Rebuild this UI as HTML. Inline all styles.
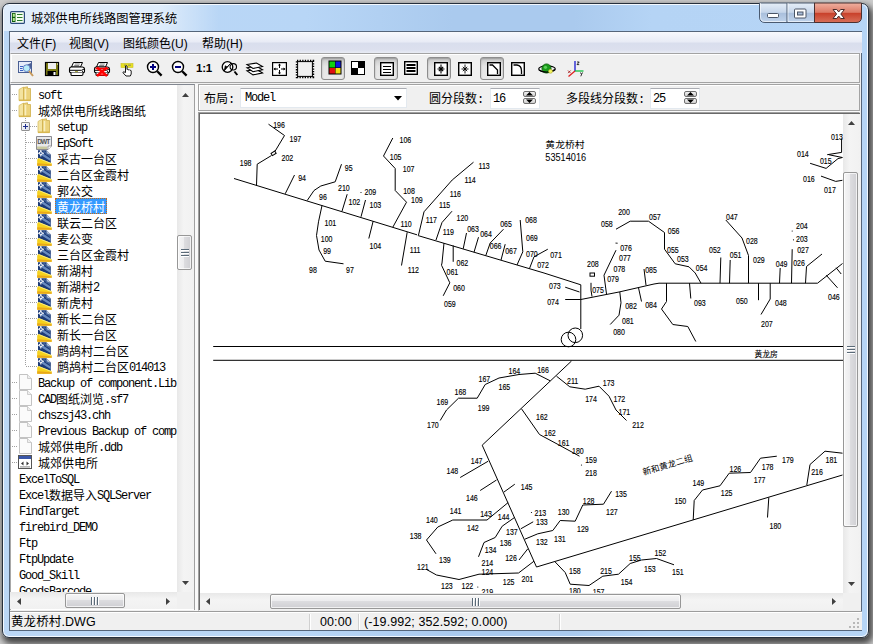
<!DOCTYPE html>
<html lang="zh"><head><meta charset="utf-8"><title>城郊供电所线路图管理系统</title>
<style>
html,body{margin:0;padding:0}
body{width:873px;height:644px;overflow:hidden;position:relative;background:#c4c4c4;font-family:"Liberation Sans","Noto Sans CJK SC",sans-serif;font-size:12px;color:#000}
div,svg{position:absolute;box-sizing:border-box}
.shadow{left:0;top:0;width:873px;height:644px;background:#ccc}
.win{left:2px;top:3px;width:867px;height:635px;border:1px solid #27303c;border-radius:7px;background:linear-gradient(to right,#bbd7f6 0,#b8d6f6 35%,#aacaee 52%,#aacaee 66%,#b5d4f5 75%,#b6d5f6 100%);box-shadow:2px 4px 6px 2px rgba(0,0,0,.65), inset 0 0 0 1px rgba(255,255,255,.85)}
.client{left:9px;top:31px;width:853px;height:600px;border:1px solid #55657a;background:#f0f0f0}
.title{left:31px;top:10px;height:18px;line-height:18px;font-size:12.2px;white-space:nowrap;text-shadow:0 0 5px rgba(255,255,255,.8)}
.menubar{left:10px;top:32px;width:852px;height:21px;background:linear-gradient(to bottom,#f8f9fd 0,#e9ecf6 45%,#d9deed 55%,#dce0ee 85%,#e9ecf4 100%)}
.mi{top:36px;height:17px;line-height:17px;font-size:12px;white-space:nowrap}
.toolbar{left:10px;top:53px;width:850px;height:30px;background:#f0f0f0;border:1px solid #a3a3a3;border-left-color:#f0f0f0;box-shadow:inset 1px 1px 0 #fff}
.ic{position:absolute;overflow:visible}
.pbtn{width:24px;height:23px;border:1px solid #8e8e8e;border-radius:3px;background:linear-gradient(to bottom,#c9c9c9,#e4e4e4 40%,#eaeaea);box-shadow:inset 0 1px 2px rgba(0,0,0,.25)}
.t11{left:196px;top:60px;width:18px;height:16px;line-height:16px;font-size:11.5px;font-weight:bold;letter-spacing:-.2px;font-family:"Liberation Sans",sans-serif}
.tree{left:10px;top:84px;width:185px;height:526px;background:#fff;border-top:1px solid #828790;border-right:1px solid #a0a0a0;border-left:1px solid #a8a8a8;overflow:hidden}
.treeclip{left:0;top:0;width:177px;height:592px;overflow:hidden}
.ti{height:16px;line-height:16px;font-size:12px;white-space:nowrap;font-family:"Liberation Mono","Noto Sans CJK SC",monospace}
.ti .m{letter-spacing:-1.2px;position:relative;top:-1px}
.ti.selt{color:#fff}
.selbg{background:#3399ff;border:1px dotted #cc6a10}
.hd{height:1px;background:repeating-linear-gradient(to right,#a0a0a0 0 1px,transparent 1px 2px)}
.vd{width:1px;background:repeating-linear-gradient(to bottom,#a0a0a0 0 1px,transparent 1px 2px)}
.plus{width:9px;height:9px;border:1px solid #919191;background:linear-gradient(135deg,#fff,#d8dce8);border-radius:1px}
.plus:before{content:"";position:absolute;left:1px;top:3px;width:5px;height:1px;background:#1c2c8c}
.plus:after{content:"";position:absolute;left:3px;top:1px;width:1px;height:5px;background:#1c2c8c}
.vtr{width:17px;background:linear-gradient(to right,#e8e8e8,#f4f4f4 40%,#f1f1f1)}
.htr{height:17px;background:linear-gradient(to bottom,#e8e8e8,#f4f4f4 40%,#f1f1f1)}
.cnr{width:17px;height:17px;background:#f0f0f0}
.vth{width:14.3px;margin:1px 0 1px .3px;border:1px solid #979797;border-radius:2px;background:linear-gradient(to right,#f6f6f6,#ececee 45%,#dcdcdf 50%,#cfcfd3);box-shadow:inset 0 0 0 1px rgba(255,255,255,.7)}
.hth{height:14.4px;margin:.4px 1px 0 1px;border:1px solid #979797;border-radius:2px;background:linear-gradient(to bottom,#f6f6f6,#ececee 45%,#dcdcdf 50%,#cfcfd3);box-shadow:inset 0 0 0 1px rgba(255,255,255,.7)}
.grh{width:8px;height:2px;background:#5a6a78;border-bottom:1px solid #fff;height:2px}
.grv{width:2px;height:8px;background:#5a6a78;border-right:1px solid #fff}
.rpanel{left:198px;top:84px;width:662px;height:27px;background:#f0f0f0;border:1px solid #a3a3a3;box-shadow:inset 1px 1px 0 #fff}
.lbl{height:16px;line-height:16px;font-size:12px;white-space:nowrap;font-family:"Liberation Mono","Noto Sans CJK SC",monospace}
.lbl .m{letter-spacing:-1.2px}
.edit{background:#fff;border:1px solid #e3e9ef;border-top-color:#abadb3}
.spin{width:13px;height:6px;border:1px solid #707070;border-radius:2px;background:linear-gradient(#f2f2f2,#cfcfcf)}
.canvas{left:198px;top:112px;width:662px;height:499px;border:1px solid #a0a0a0;border-bottom-color:#eee;border-right-color:#eee;background:#fff}
.canvas2{left:199px;top:113px;width:661px;height:497px;border-right-color:#fff;border-bottom-color:#fff;border:1px solid #696969;background:#fff}
.status{left:10px;top:611px;width:852px;height:19px;background:#f0f0f0;border-top:1px solid #9c9c9c;box-shadow:inset 0 1px 0 #fff}
.st{top:614px;height:17px;line-height:17px;font-size:12.5px;letter-spacing:.1px;white-space:nowrap}
.sdiv{top:614px;width:1px;height:16px;background:#d0d0d0;border-right:1px solid #fff;width:2px}
.cap{top:3px;height:19px}
svg.dw text{font-family:"Liberation Sans",sans-serif;font-size:8.8px;fill:#000;stroke:#000;stroke-width:.14px}
svg.dw polyline,svg.dw circle,svg.dw line,svg.dw .s{fill:none;stroke:#000;stroke-width:1}
</style></head><body>
<div class="shadow"></div>
<div class="win"></div>
<div style="left:4px;top:5px;width:215px;height:26px;border-radius:5px 0 0 0;background:linear-gradient(to right,rgba(255,255,255,.55) 0,rgba(255,255,255,.55) 72%,rgba(255,255,255,0) 100%)"></div>
<!-- title icon -->
<svg class="ic" style="left:10px;top:11px" width="15" height="13" viewBox="0 0 15 13"><rect x=".6" y=".6" width="13.8" height="11.8" rx="1" fill="#f4fff0" stroke="#2a4a7c" stroke-width="1.2"/><rect x="2" y="2" width="3.5" height="9" fill="#0a5a0a"/><rect x="2.8" y="2.8" width="2" height="3" fill="#b8e890"/><rect x="2.8" y="7" width="2" height="3" fill="#b8e890"/><path d="M7 3.5h5.5M7 6.5h5.5M7 9.5h5.5" stroke="#2a7a2a" stroke-width="1.1"/></svg>
<div class="title">城郊供电所线路图管理系统</div>
<!-- caption buttons -->
<svg class="ic" style="left:759px;top:4px" width="104" height="19" viewBox="0 1 104 19">
<defs><linearGradient id="gb" x1="0" y1="0" x2="0" y2="1"><stop offset="0" stop-color="#e6eef8"/><stop offset=".48" stop-color="#c6d6ea"/><stop offset=".52" stop-color="#a9bfdc"/><stop offset="1" stop-color="#c0d4ec"/></linearGradient>
<linearGradient id="gr" x1="0" y1="0" x2="0" y2="1"><stop offset="0" stop-color="#f0b0a0"/><stop offset=".48" stop-color="#dc7a66"/><stop offset=".52" stop-color="#c8402a"/><stop offset="1" stop-color="#d8705a"/></linearGradient></defs>
<path d="M.5 0 V14 Q.5 19.5 6 19.5 H56 V0Z" fill="url(#gb)" stroke="#4a5a70"/>
<path d="M55.5 0 V19.5 H97 Q102.5 19.5 102.5 14 V0Z" fill="url(#gr)" stroke="#4a3030"/>
<path d="M28 0V19.5" stroke="#4a5a70"/><path d="M1.5 0V14 Q1.5 18.5 6 18.5H27M29 0V18.5H54.5" stroke="rgba(255,255,255,.6)" fill="none"/>
<rect x="8.5" y="10.5" width="11" height="4" rx="1" fill="#fff" stroke="#4a5566"/>
<rect x="35.5" y="6" width="11.5" height="9" rx="1" fill="#fff" stroke="#4a5566"/><rect x="38.5" y="9" width="5.5" height="3" fill="#a8bcd8" stroke="#4a5566"/>
<path d="M74 6.5 L77.8 6.5 L79.7 9 L81.6 6.5 L85.4 6.5 L81.8 11 L85.4 15.5 L81.6 15.5 L79.7 13 L77.8 15.5 L74 15.5 L77.6 11Z" fill="#fff" stroke="#4a2a2a" stroke-width="1"/>
</svg>
<div class="client"></div>
<div class="menubar"></div>
<div class="mi" style="left:17px">文件(F)</div><div class="mi" style="left:69px">视图(V)</div><div class="mi" style="left:123px">图纸颜色(U)</div><div class="mi" style="left:202px">帮助(H)</div>
<div class="toolbar"></div>
<div class="pbtn" style="left:321px;top:57px"></div>
<div class="pbtn" style="left:374px;top:57px"></div>
<div class="pbtn" style="left:427px;top:57px"></div>
<div class="pbtn" style="left:480px;top:57px"></div>
<svg class="ic" style="left:18px;top:61px" width="16" height="16" viewBox="0 0 16 16"><rect x=".5" y=".5" width="13" height="11" fill="#e6edfa" stroke="#4a5f94"/><path d="M2 5.5h3M2 7.5h2.5M2 9.5h3" stroke="#3a62c4" stroke-width="1.2"/><path d="M6 5 L13 2 V8Z" fill="#4a5f94"/><circle cx="8.6" cy="7.2" r="3.4" fill="#b6ecf8" stroke="#6a86c8" stroke-width="1"/><path d="M11 10 L15 15" stroke="#c89a5a" stroke-width="2"/></svg>
<svg class="ic" style="left:45px;top:62px" width="14" height="14" viewBox="0 0 14 14"><rect x=".5" y=".5" width="13" height="13" fill="#7c7c14" stroke="#000" stroke-width="1.2"/><rect x="3" y="1" width="8" height="6" fill="#f0f0f0"/><rect x="2.5" y="9" width="8.5" height="4.5" fill="#000"/><rect x="8.5" y="10" width="2" height="3" fill="#fff"/><rect x="12" y="1.5" width="1" height="1" fill="#fff"/></svg>
<svg class="ic" style="left:69px;top:62px" width="16" height="14" viewBox="0 0 16 14"><path d="M4.5 .5 H13.5 L11.5 5 H2.500Z" fill="#fff" stroke="#000" stroke-width="1"/><path d="M5.8 2h5M5.2 3.500h5" stroke="#555" stroke-width=".7"/><path d="M2 5 H13.5 Q15.5 5.3 15.5 7 V9.5 Q15.5 10.5 14.5 10.5 H1.5 Q.5 10.5 .5 9.5 V7 Q.5 5.3 2 5Z" fill="#fff" stroke="#000" stroke-width="1.1"/><path d="M.8 8.3 H12.5 L15.2 7" stroke="#000" stroke-width="1" fill="none"/><path d="M2 10.5 V12.5 Q2 13.5 3 13.5 H12.5 Q14 13.5 14 12 V10.5" fill="#fff" stroke="#000" stroke-width="1.1"/><circle cx="13.6" cy="9.3" r=".6" fill="#000"/><rect x="6" y="9.2" width="3" height=".9" fill="#9a9a20"/></svg>
<svg class="ic" style="left:94px;top:62px" width="16" height="14" viewBox="0 0 16 14"><path d="M4.5 .5 H13.5 L11.5 5 H2.500Z" fill="#fff" stroke="#000" stroke-width="1"/><path d="M5.8 2h5M5.2 3.500h5" stroke="#555" stroke-width=".7"/><path d="M2 5 H13.5 Q15.5 5.3 15.5 7 V9.5 Q15.5 10.5 14.5 10.5 H1.5 Q.5 10.5 .5 9.5 V7 Q.5 5.3 2 5Z" fill="#fff" stroke="#000" stroke-width="1.1"/><path d="M.8 8.3 H12.5 L15.2 7" stroke="#000" stroke-width="1" fill="none"/><path d="M2 10.5 V12.5 Q2 13.5 3 13.5 H12.5 Q14 13.5 14 12 V10.5" fill="#fff" stroke="#000" stroke-width="1.1"/><circle cx="13.6" cy="9.3" r=".6" fill="#000"/><rect x="6" y="9.2" width="3" height=".9" fill="#9a9a20"/><path d="M3 5.5 L13 14 M13 5.5 L3 14" stroke="#f00" stroke-width="2.4"/><path d="M1.5 6.500h13M2.5 13h11" stroke="#f00" stroke-width="1.5"/></svg>
<svg class="ic" style="left:120px;top:63px" width="14" height="14" viewBox="0 0 14 14"><rect x="1" y=".5" width="12" height="4" fill="#e8e020" stroke="#c8c020" stroke-width=".6"/><path d="M4 2.2h2M8 2.2h3" stroke="#777" stroke-width=".8"/><path d="M5.5 9.5 V3 Q6.3 2 7 3 V6.5 Q7.8 5.8 8.4 6.8 Q9.3 6.2 9.9 7.3 Q11 6.9 11.2 8 V11 L10.3 13 H6 L3 9.8 Q2.8 8.8 3.8 8.8 Z" fill="#fff" stroke="#000" stroke-width=".9"/></svg>
<svg class="ic" style="left:146px;top:60px" width="16" height="16" viewBox="0 0 16 16"><circle cx="7" cy="7" r="5.5" fill="#fbfbfb" stroke="#000" stroke-width="1.4"/><path d="M11.2 11.2 L15.6 15.6" stroke="#000" stroke-width="2.3"/><path d="M4 7h6M7 4v6" stroke="#000080" stroke-width="2"/></svg>
<svg class="ic" style="left:171px;top:60px" width="16" height="16" viewBox="0 0 16 16"><circle cx="7" cy="7" r="5.5" fill="#fbfbfb" stroke="#000" stroke-width="1.4"/><path d="M11.2 11.2 L15.6 15.6" stroke="#000" stroke-width="2.3"/><path d="M4 7h6" stroke="#000080" stroke-width="2"/></svg>
<div class="t11">1:1</div>
<svg class="ic" style="left:221px;top:60px" width="17" height="16" viewBox="0 0 17 16"><circle cx="6.5" cy="7" r="5.3" fill="#fbfbfb" stroke="#000" stroke-width="1.3"/><path d="M9.8 3.2 L3.3 10.8 L4.3 5.8 L6 7Z" fill="#000" stroke="#000" stroke-width=".8"/><circle cx="12.3" cy="6.8" r="3.2" fill="none" stroke="#000" stroke-width="1.1"/><path d="M13.5 11.5 L16.3 15" stroke="#000" stroke-width="2"/></svg>
<svg class="ic" style="left:246px;top:61px" width="18" height="15" viewBox="0 0 18 15"><path d="M1 9.9 L10.5 8.4 L16.5 11.9 L7 13.9Z" fill="#fff" stroke="#000" stroke-width="1.1"/><path d="M1 6.7 L10.5 5.2 L16.5 8.7 L7 10.7Z" fill="#fff" stroke="#000" stroke-width="1.1"/><path d="M1 3.5 L10.5 2 L16.5 5.5 L7 7.5Z" fill="#fff" stroke="#000" stroke-width="1.1"/></svg>
<svg class="ic" style="left:272px;top:62px" width="15" height="14" viewBox="0 0 15 14"><rect x=".6" y=".6" width="13.8" height="12.8" fill="#fff" stroke="#000" stroke-width="1.2"/><path d="M7.5 2v4M7.5 8v4M2 7h4M9 7h4" stroke="#000" stroke-width="1"/><path d="M6 3.5h3L7.5 1.5ZM6 10.5h3L7.5 12.5ZM3.5 5.5v3L1.5 7ZM11.5 5.5v3L13.5 7Z" fill="#000"/></svg>
<svg class="ic" style="left:295px;top:59px" width="20" height="20" viewBox="0 0 20 20"><rect x="2" y="2" width="16" height="16" fill="#f4f4f4" stroke="#000" stroke-width="2.4" stroke-dasharray="1.3 1.3"/><rect x="2.6" y="2.6" width="14.8" height="14.8" fill="#f0f0f0" stroke="#000" stroke-width="1"/></svg>
<svg class="ic" style="left:328px;top:60px" width="14" height="15" viewBox="0 0 14 15"><rect x=".5" y=".5" width="13" height="14" fill="#000"/><rect x="1.5" y="1.5" width="5.5" height="6" fill="#10d010"/><rect x="7.5" y="1.5" width="5" height="6" fill="#1018e0"/><rect x="1.5" y="8" width="5.5" height="5.5" fill="#e01010"/><rect x="7.5" y="8" width="5" height="5.5" fill="#f0e010"/></svg>
<svg class="ic" style="left:351px;top:61px" width="14" height="14" viewBox="0 0 14 14"><rect x=".5" y=".5" width="13" height="13" fill="#fff" stroke="#000"/><rect x="7" y="0" width="7" height="7" fill="#000"/><rect x="0" y="7" width="7" height="7" fill="#000"/></svg>
<svg class="ic" style="left:380px;top:62px" width="14" height="14" viewBox="0 0 14 14"><rect x=".7" y=".7" width="12.6" height="12.6" fill="#fff" stroke="#000" stroke-width="1.4"/><path d="M3 4.500h8M3 7.500h8M3 10.500h8" stroke="#000" stroke-width="1"/></svg>
<svg class="ic" style="left:404px;top:61px" width="14" height="14" viewBox="0 0 14 14"><rect x=".7" y=".7" width="12.6" height="12.6" fill="#fff" stroke="#000" stroke-width="1.4"/><path d="M2.5 4h9M2.5 7h9M2.5 10h9" stroke="#000" stroke-width="2"/></svg>
<svg class="ic" style="left:434px;top:62px" width="14" height="14" viewBox="0 0 14 14"><rect x=".7" y=".7" width="12.6" height="12.6" fill="#fff" stroke="#000" stroke-width="1.4"/><path d="M7 2.500v9M3.5 7h7M4.8 4.800l4.4 4.400M9.2 4.800l-4.4 4.4" stroke="#000" stroke-width="1.1"/></svg>
<svg class="ic" style="left:458px;top:62px" width="14" height="14" viewBox="0 0 14 14"><rect x=".7" y=".7" width="12.6" height="12.6" fill="#fff" stroke="#000" stroke-width="1.4"/><path d="M7 2.500v9M3.5 7h7M4.8 4.800l4.4 4.400M9.2 4.800l-4.4 4.4" stroke="#000" stroke-width="0.9"/></svg>
<svg class="ic" style="left:487px;top:62px" width="14" height="14" viewBox="0 0 14 14"><rect x=".7" y=".7" width="12.6" height="12.6" fill="#fff" stroke="#000" stroke-width="1.4"/><path d="M2.5 3 H5.5 L10.5 8 V12" fill="none" stroke="#000" stroke-width="1.3"/></svg>
<svg class="ic" style="left:511px;top:62px" width="14" height="14" viewBox="0 0 14 14"><rect x=".7" y=".7" width="12.6" height="12.6" fill="#fff" stroke="#000" stroke-width="1.4"/><path d="M2.5 3 H6 Q10.5 3.5 10.5 9 V12" fill="none" stroke="#000" stroke-width="1.3"/></svg>
<svg class="ic" style="left:538px;top:63px" width="18" height="12" viewBox="0 0 18 12"><ellipse cx="9" cy="6" rx="8.3" ry="3.2" fill="none" stroke="#000" stroke-width="1.2"/><circle cx="8.5" cy="5.5" r="4.6" fill="#1a9a1a" stroke="#0a5a0a" stroke-width=".8"/><circle cx="7.5" cy="4.3" r="1.6" fill="#5ad05a"/><path d="M1 7 Q9 11.5 17 6.5" fill="none" stroke="#000" stroke-width="1.2"/><circle cx="12.5" cy="8.3" r="2" fill="#f0f060" stroke="#a0a020" stroke-width=".5"/></svg>
<svg class="ic" style="left:567px;top:60px" width="18" height="17" viewBox="0 0 18 17"><path d="M8 1V11" stroke="#1a1ad0" stroke-width="1.3"/><path d="M8 11H16.5" stroke="#10c040" stroke-width="1.3"/><path d="M8 11L1.5 16.5" stroke="#e02020" stroke-width="1.3"/><path d="M10 2h2.2l-2.2 2.6h2.2" fill="none" stroke="#000" stroke-width=".8"/><path d="M1 10.5l2.6 2.6M3.6 10.5l-2.6 2.6" stroke="#a01010" stroke-width=".8"/><path d="M13.5 12.5l1 2 1-2M14.5 14.5l-.7 1.8" fill="none" stroke="#000" stroke-width=".8"/></svg>
<!-- tree -->
<div class="tree"></div>
<div class="treeclip">
<div class="vd" style="left:25px;top:116px;height:250px"></div>
<div class="hd" style="left:12px;top:94px;width:6px"></div>
<svg class="ic" style="left:18px;top:86px" width="14" height="16" viewBox="0 0 14 16"><path d="M1 3.5 L5.5 1 L5.5 14.5 L1 14.5 Z" fill="#f3e3a0" stroke="#d9bf62" stroke-width=".8"/><path d="M5.5 1.5 L9.5 0.8 L9.5 2.5 L12.5 2.5 L12.5 14.5 L5.5 14.5 Z" fill="#ecd37c" stroke="#cfae4a" stroke-width=".8"/><path d="M7.5 3 L7.5 14" stroke="#f8eec0" stroke-width="1.5"/><rect x="1" y="13.5" width="11.5" height="1.6" fill="#d8b750"/></svg>
<div class="ti" style="left:38px;top:89px"><span class="m">soft</span></div>
<div class="hd" style="left:12px;top:110px;width:6px"></div>
<svg class="ic" style="left:18px;top:102px" width="14" height="16" viewBox="0 0 14 16"><path d="M1 3.5 L5.5 1 L5.5 14.5 L1 14.5 Z" fill="#f3e3a0" stroke="#d9bf62" stroke-width=".8"/><path d="M5.5 1.5 L9.5 0.8 L9.5 2.5 L12.5 2.5 L12.5 14.5 L5.5 14.5 Z" fill="#ecd37c" stroke="#cfae4a" stroke-width=".8"/><path d="M7.5 3 L7.5 14" stroke="#f8eec0" stroke-width="1.5"/><rect x="1" y="13.5" width="11.5" height="1.6" fill="#d8b750"/></svg>
<div class="ti" style="left:38px;top:105px">城郊供电所线路图纸</div>
<div class="hd" style="left:26px;top:126px;width:11px"></div>
<svg class="ic" style="left:37px;top:118px" width="14" height="16" viewBox="0 0 14 16"><path d="M1 3.5 L5.5 1 L5.5 14.5 L1 14.5 Z" fill="#f3e3a0" stroke="#d9bf62" stroke-width=".8"/><path d="M5.5 1.5 L9.5 0.8 L9.5 2.5 L12.5 2.5 L12.5 14.5 L5.5 14.5 Z" fill="#ecd37c" stroke="#cfae4a" stroke-width=".8"/><path d="M7.5 3 L7.5 14" stroke="#f8eec0" stroke-width="1.5"/><rect x="1" y="13.5" width="11.5" height="1.6" fill="#d8b750"/></svg>
<div class="plus" style="left:21px;top:122px"></div>
<div class="ti" style="left:57px;top:121px"><span class="m">setup</span></div>
<div class="hd" style="left:26px;top:142px;width:11px"></div>
<svg class="ic" style="left:36px;top:136px" width="16" height="14" viewBox="0 0 16 14"><path d="M.5 .5 H15.5 V10 L12 13.5 H.5 Z" fill="#e8e8ea" stroke="#8a8a90" stroke-width="1"/><path d="M12 13.5 V10 H15.5" fill="#fff" stroke="#8a8a90" stroke-width=".8"/><text x="1.2" y="8" font-family="Liberation Sans,sans-serif" font-size="6.5" font-weight="bold" fill="#555" textLength="13">DWT</text><rect x="1" y="10.5" width="10" height="2.5" fill="#c9c9a0"/></svg>
<div class="ti" style="left:57px;top:137px"><span class="m">EpSoft</span></div>
<div class="hd" style="left:26px;top:158px;width:11px"></div>
<svg class="ic" style="left:37px;top:150px" width="15" height="16" viewBox="0 0 15 16"><path d="M1 .3 H9.5 L13.8 4.5 V13.5 H1Z" fill="#1d3b78"/><path d="M9.5 .3 L13.8 4.5 H9.500Z" fill="#b4c2d6"/><path d="M4.5 2.5 L13.5 8.5 V11 L3 4.500Z" fill="#6a8cc0"/><path d="M7 .8 L13 5.5 V7 L6 1.500Z" fill="#44669e"/><path d="M.2 15.7 V9.5 L1.5 8 L14.7 13.3 V15.700Z" fill="#f6d21e"/><path d="M.2 15.7 V13.3 L14.7 14.3 V15.700Z" fill="#e9a81a"/><path d="M1.5 8.4 L14.5 13.6" stroke="#fbf08a" stroke-width=".9"/><path d="M.5 3.2 H7 M3.8 0 V6.5" stroke="#fff" stroke-width="1.1"/><circle cx="3.8" cy="3.2" r="1.5" fill="#44669e" stroke="#fff" stroke-width="1"/></svg>
<div class="ti" style="left:57px;top:153px">采古一台区</div>
<div class="hd" style="left:26px;top:174px;width:11px"></div>
<svg class="ic" style="left:37px;top:166px" width="15" height="16" viewBox="0 0 15 16"><path d="M1 .3 H9.5 L13.8 4.5 V13.5 H1Z" fill="#1d3b78"/><path d="M9.5 .3 L13.8 4.5 H9.500Z" fill="#b4c2d6"/><path d="M4.5 2.5 L13.5 8.5 V11 L3 4.500Z" fill="#6a8cc0"/><path d="M7 .8 L13 5.5 V7 L6 1.500Z" fill="#44669e"/><path d="M.2 15.7 V9.5 L1.5 8 L14.7 13.3 V15.700Z" fill="#f6d21e"/><path d="M.2 15.7 V13.3 L14.7 14.3 V15.700Z" fill="#e9a81a"/><path d="M1.5 8.4 L14.5 13.6" stroke="#fbf08a" stroke-width=".9"/><path d="M.5 3.2 H7 M3.8 0 V6.5" stroke="#fff" stroke-width="1.1"/><circle cx="3.8" cy="3.2" r="1.5" fill="#44669e" stroke="#fff" stroke-width="1"/></svg>
<div class="ti" style="left:57px;top:169px">二台区金霞村</div>
<div class="hd" style="left:26px;top:190px;width:11px"></div>
<svg class="ic" style="left:37px;top:182px" width="15" height="16" viewBox="0 0 15 16"><path d="M1 .3 H9.5 L13.8 4.5 V13.5 H1Z" fill="#1d3b78"/><path d="M9.5 .3 L13.8 4.5 H9.500Z" fill="#b4c2d6"/><path d="M4.5 2.5 L13.5 8.5 V11 L3 4.500Z" fill="#6a8cc0"/><path d="M7 .8 L13 5.5 V7 L6 1.500Z" fill="#44669e"/><path d="M.2 15.7 V9.5 L1.5 8 L14.7 13.3 V15.700Z" fill="#f6d21e"/><path d="M.2 15.7 V13.3 L14.7 14.3 V15.700Z" fill="#e9a81a"/><path d="M1.5 8.4 L14.5 13.6" stroke="#fbf08a" stroke-width=".9"/><path d="M.5 3.2 H7 M3.8 0 V6.5" stroke="#fff" stroke-width="1.1"/><circle cx="3.8" cy="3.2" r="1.5" fill="#44669e" stroke="#fff" stroke-width="1"/></svg>
<div class="ti" style="left:57px;top:185px">郭公交</div>
<div class="hd" style="left:26px;top:206px;width:11px"></div>
<svg class="ic" style="left:37px;top:198px" width="15" height="16" viewBox="0 0 15 16"><path d="M1 .3 H9.5 L13.8 4.5 V13.5 H1Z" fill="#1d3b78"/><path d="M9.5 .3 L13.8 4.5 H9.500Z" fill="#b4c2d6"/><path d="M4.5 2.5 L13.5 8.5 V11 L3 4.500Z" fill="#6a8cc0"/><path d="M7 .8 L13 5.5 V7 L6 1.500Z" fill="#44669e"/><path d="M.2 15.7 V9.5 L1.5 8 L14.7 13.3 V15.700Z" fill="#f6d21e"/><path d="M.2 15.7 V13.3 L14.7 14.3 V15.700Z" fill="#e9a81a"/><path d="M1.5 8.4 L14.5 13.6" stroke="#fbf08a" stroke-width=".9"/><path d="M.5 3.2 H7 M3.8 0 V6.5" stroke="#fff" stroke-width="1.1"/><circle cx="3.8" cy="3.2" r="1.5" fill="#44669e" stroke="#fff" stroke-width="1"/></svg>
<div class="selbg" style="left:55px;top:198px;width:52px;height:16px"></div>
<div class="ti selt" style="left:57px;top:201px">黄龙桥村</div>
<div class="hd" style="left:26px;top:222px;width:11px"></div>
<svg class="ic" style="left:37px;top:214px" width="15" height="16" viewBox="0 0 15 16"><path d="M1 .3 H9.5 L13.8 4.5 V13.5 H1Z" fill="#1d3b78"/><path d="M9.5 .3 L13.8 4.5 H9.500Z" fill="#b4c2d6"/><path d="M4.5 2.5 L13.5 8.5 V11 L3 4.500Z" fill="#6a8cc0"/><path d="M7 .8 L13 5.5 V7 L6 1.500Z" fill="#44669e"/><path d="M.2 15.7 V9.5 L1.5 8 L14.7 13.3 V15.700Z" fill="#f6d21e"/><path d="M.2 15.7 V13.3 L14.7 14.3 V15.700Z" fill="#e9a81a"/><path d="M1.5 8.4 L14.5 13.6" stroke="#fbf08a" stroke-width=".9"/><path d="M.5 3.2 H7 M3.8 0 V6.5" stroke="#fff" stroke-width="1.1"/><circle cx="3.8" cy="3.2" r="1.5" fill="#44669e" stroke="#fff" stroke-width="1"/></svg>
<div class="ti" style="left:57px;top:217px">联云二台区</div>
<div class="hd" style="left:26px;top:238px;width:11px"></div>
<svg class="ic" style="left:37px;top:230px" width="15" height="16" viewBox="0 0 15 16"><path d="M1 .3 H9.5 L13.8 4.5 V13.5 H1Z" fill="#1d3b78"/><path d="M9.5 .3 L13.8 4.5 H9.500Z" fill="#b4c2d6"/><path d="M4.5 2.5 L13.5 8.5 V11 L3 4.500Z" fill="#6a8cc0"/><path d="M7 .8 L13 5.5 V7 L6 1.500Z" fill="#44669e"/><path d="M.2 15.7 V9.5 L1.5 8 L14.7 13.3 V15.700Z" fill="#f6d21e"/><path d="M.2 15.7 V13.3 L14.7 14.3 V15.700Z" fill="#e9a81a"/><path d="M1.5 8.4 L14.5 13.6" stroke="#fbf08a" stroke-width=".9"/><path d="M.5 3.2 H7 M3.8 0 V6.5" stroke="#fff" stroke-width="1.1"/><circle cx="3.8" cy="3.2" r="1.5" fill="#44669e" stroke="#fff" stroke-width="1"/></svg>
<div class="ti" style="left:57px;top:233px">麦公变</div>
<div class="hd" style="left:26px;top:254px;width:11px"></div>
<svg class="ic" style="left:37px;top:246px" width="15" height="16" viewBox="0 0 15 16"><path d="M1 .3 H9.5 L13.8 4.5 V13.5 H1Z" fill="#1d3b78"/><path d="M9.5 .3 L13.8 4.5 H9.500Z" fill="#b4c2d6"/><path d="M4.5 2.5 L13.5 8.5 V11 L3 4.500Z" fill="#6a8cc0"/><path d="M7 .8 L13 5.5 V7 L6 1.500Z" fill="#44669e"/><path d="M.2 15.7 V9.5 L1.5 8 L14.7 13.3 V15.700Z" fill="#f6d21e"/><path d="M.2 15.7 V13.3 L14.7 14.3 V15.700Z" fill="#e9a81a"/><path d="M1.5 8.4 L14.5 13.6" stroke="#fbf08a" stroke-width=".9"/><path d="M.5 3.2 H7 M3.8 0 V6.5" stroke="#fff" stroke-width="1.1"/><circle cx="3.8" cy="3.2" r="1.5" fill="#44669e" stroke="#fff" stroke-width="1"/></svg>
<div class="ti" style="left:57px;top:249px">三台区金霞村</div>
<div class="hd" style="left:26px;top:270px;width:11px"></div>
<svg class="ic" style="left:37px;top:262px" width="15" height="16" viewBox="0 0 15 16"><path d="M1 .3 H9.5 L13.8 4.5 V13.5 H1Z" fill="#1d3b78"/><path d="M9.5 .3 L13.8 4.5 H9.500Z" fill="#b4c2d6"/><path d="M4.5 2.5 L13.5 8.5 V11 L3 4.500Z" fill="#6a8cc0"/><path d="M7 .8 L13 5.5 V7 L6 1.500Z" fill="#44669e"/><path d="M.2 15.7 V9.5 L1.5 8 L14.7 13.3 V15.700Z" fill="#f6d21e"/><path d="M.2 15.7 V13.3 L14.7 14.3 V15.700Z" fill="#e9a81a"/><path d="M1.5 8.4 L14.5 13.6" stroke="#fbf08a" stroke-width=".9"/><path d="M.5 3.2 H7 M3.8 0 V6.5" stroke="#fff" stroke-width="1.1"/><circle cx="3.8" cy="3.2" r="1.5" fill="#44669e" stroke="#fff" stroke-width="1"/></svg>
<div class="ti" style="left:57px;top:265px">新湖村</div>
<div class="hd" style="left:26px;top:286px;width:11px"></div>
<svg class="ic" style="left:37px;top:278px" width="15" height="16" viewBox="0 0 15 16"><path d="M1 .3 H9.5 L13.8 4.5 V13.5 H1Z" fill="#1d3b78"/><path d="M9.5 .3 L13.8 4.5 H9.500Z" fill="#b4c2d6"/><path d="M4.5 2.5 L13.5 8.5 V11 L3 4.500Z" fill="#6a8cc0"/><path d="M7 .8 L13 5.5 V7 L6 1.500Z" fill="#44669e"/><path d="M.2 15.7 V9.5 L1.5 8 L14.7 13.3 V15.700Z" fill="#f6d21e"/><path d="M.2 15.7 V13.3 L14.7 14.3 V15.700Z" fill="#e9a81a"/><path d="M1.5 8.4 L14.5 13.6" stroke="#fbf08a" stroke-width=".9"/><path d="M.5 3.2 H7 M3.8 0 V6.5" stroke="#fff" stroke-width="1.1"/><circle cx="3.8" cy="3.2" r="1.5" fill="#44669e" stroke="#fff" stroke-width="1"/></svg>
<div class="ti" style="left:57px;top:281px">新湖村<span class="m">2</span></div>
<div class="hd" style="left:26px;top:302px;width:11px"></div>
<svg class="ic" style="left:37px;top:294px" width="15" height="16" viewBox="0 0 15 16"><path d="M1 .3 H9.5 L13.8 4.5 V13.5 H1Z" fill="#1d3b78"/><path d="M9.5 .3 L13.8 4.5 H9.500Z" fill="#b4c2d6"/><path d="M4.5 2.5 L13.5 8.5 V11 L3 4.500Z" fill="#6a8cc0"/><path d="M7 .8 L13 5.5 V7 L6 1.500Z" fill="#44669e"/><path d="M.2 15.7 V9.5 L1.5 8 L14.7 13.3 V15.700Z" fill="#f6d21e"/><path d="M.2 15.7 V13.3 L14.7 14.3 V15.700Z" fill="#e9a81a"/><path d="M1.5 8.4 L14.5 13.6" stroke="#fbf08a" stroke-width=".9"/><path d="M.5 3.2 H7 M3.8 0 V6.5" stroke="#fff" stroke-width="1.1"/><circle cx="3.8" cy="3.2" r="1.5" fill="#44669e" stroke="#fff" stroke-width="1"/></svg>
<div class="ti" style="left:57px;top:297px">新虎村</div>
<div class="hd" style="left:26px;top:318px;width:11px"></div>
<svg class="ic" style="left:37px;top:310px" width="15" height="16" viewBox="0 0 15 16"><path d="M1 .3 H9.5 L13.8 4.5 V13.5 H1Z" fill="#1d3b78"/><path d="M9.5 .3 L13.8 4.5 H9.500Z" fill="#b4c2d6"/><path d="M4.5 2.5 L13.5 8.5 V11 L3 4.500Z" fill="#6a8cc0"/><path d="M7 .8 L13 5.5 V7 L6 1.500Z" fill="#44669e"/><path d="M.2 15.7 V9.5 L1.5 8 L14.7 13.3 V15.700Z" fill="#f6d21e"/><path d="M.2 15.7 V13.3 L14.7 14.3 V15.700Z" fill="#e9a81a"/><path d="M1.5 8.4 L14.5 13.6" stroke="#fbf08a" stroke-width=".9"/><path d="M.5 3.2 H7 M3.8 0 V6.5" stroke="#fff" stroke-width="1.1"/><circle cx="3.8" cy="3.2" r="1.5" fill="#44669e" stroke="#fff" stroke-width="1"/></svg>
<div class="ti" style="left:57px;top:313px">新长二台区</div>
<div class="hd" style="left:26px;top:334px;width:11px"></div>
<svg class="ic" style="left:37px;top:326px" width="15" height="16" viewBox="0 0 15 16"><path d="M1 .3 H9.5 L13.8 4.5 V13.5 H1Z" fill="#1d3b78"/><path d="M9.5 .3 L13.8 4.5 H9.500Z" fill="#b4c2d6"/><path d="M4.5 2.5 L13.5 8.5 V11 L3 4.500Z" fill="#6a8cc0"/><path d="M7 .8 L13 5.5 V7 L6 1.500Z" fill="#44669e"/><path d="M.2 15.7 V9.5 L1.5 8 L14.7 13.3 V15.700Z" fill="#f6d21e"/><path d="M.2 15.7 V13.3 L14.7 14.3 V15.700Z" fill="#e9a81a"/><path d="M1.5 8.4 L14.5 13.6" stroke="#fbf08a" stroke-width=".9"/><path d="M.5 3.2 H7 M3.8 0 V6.5" stroke="#fff" stroke-width="1.1"/><circle cx="3.8" cy="3.2" r="1.5" fill="#44669e" stroke="#fff" stroke-width="1"/></svg>
<div class="ti" style="left:57px;top:329px">新长一台区</div>
<div class="hd" style="left:26px;top:350px;width:11px"></div>
<svg class="ic" style="left:37px;top:342px" width="15" height="16" viewBox="0 0 15 16"><path d="M1 .3 H9.5 L13.8 4.5 V13.5 H1Z" fill="#1d3b78"/><path d="M9.5 .3 L13.8 4.5 H9.500Z" fill="#b4c2d6"/><path d="M4.5 2.5 L13.5 8.5 V11 L3 4.500Z" fill="#6a8cc0"/><path d="M7 .8 L13 5.5 V7 L6 1.500Z" fill="#44669e"/><path d="M.2 15.7 V9.5 L1.5 8 L14.7 13.3 V15.700Z" fill="#f6d21e"/><path d="M.2 15.7 V13.3 L14.7 14.3 V15.700Z" fill="#e9a81a"/><path d="M1.5 8.4 L14.5 13.6" stroke="#fbf08a" stroke-width=".9"/><path d="M.5 3.2 H7 M3.8 0 V6.5" stroke="#fff" stroke-width="1.1"/><circle cx="3.8" cy="3.2" r="1.5" fill="#44669e" stroke="#fff" stroke-width="1"/></svg>
<div class="ti" style="left:57px;top:345px">鹧鸪村二台区</div>
<div class="hd" style="left:26px;top:366px;width:11px"></div>
<svg class="ic" style="left:37px;top:358px" width="15" height="16" viewBox="0 0 15 16"><path d="M1 .3 H9.5 L13.8 4.5 V13.5 H1Z" fill="#1d3b78"/><path d="M9.5 .3 L13.8 4.5 H9.500Z" fill="#b4c2d6"/><path d="M4.5 2.5 L13.5 8.5 V11 L3 4.500Z" fill="#6a8cc0"/><path d="M7 .8 L13 5.5 V7 L6 1.500Z" fill="#44669e"/><path d="M.2 15.7 V9.5 L1.5 8 L14.7 13.3 V15.700Z" fill="#f6d21e"/><path d="M.2 15.7 V13.3 L14.7 14.3 V15.700Z" fill="#e9a81a"/><path d="M1.5 8.4 L14.5 13.6" stroke="#fbf08a" stroke-width=".9"/><path d="M.5 3.2 H7 M3.8 0 V6.5" stroke="#fff" stroke-width="1.1"/><circle cx="3.8" cy="3.2" r="1.5" fill="#44669e" stroke="#fff" stroke-width="1"/></svg>
<div class="ti" style="left:57px;top:361px">鹧鸪村二台区<span class="m">014013</span></div>
<div class="hd" style="left:12px;top:382px;width:6px"></div>
<svg class="ic" style="left:19px;top:374px" width="13" height="16" viewBox="0 0 13 16"><path d="M.5 .5 H8.5 L12.5 4.5 V15.5 H.5 Z" fill="#fbfbfb" stroke="#c3c3c3" stroke-width="1"/><path d="M8.5 .5 V4.5 H12.5" fill="#eee" stroke="#c3c3c3" stroke-width=".8"/></svg>
<div class="ti" style="left:38px;top:377px"><span class="m">Backup&nbsp;of&nbsp;component.Lib</span></div>
<div class="hd" style="left:12px;top:398px;width:6px"></div>
<svg class="ic" style="left:19px;top:390px" width="13" height="16" viewBox="0 0 13 16"><path d="M.5 .5 H8.5 L12.5 4.5 V15.5 H.5 Z" fill="#fbfbfb" stroke="#c3c3c3" stroke-width="1"/><path d="M8.5 .5 V4.5 H12.5" fill="#eee" stroke="#c3c3c3" stroke-width=".8"/></svg>
<div class="ti" style="left:38px;top:393px"><span class="m">CAD</span>图纸浏览<span class="m">.sf7</span></div>
<div class="hd" style="left:12px;top:414px;width:6px"></div>
<svg class="ic" style="left:19px;top:406px" width="13" height="16" viewBox="0 0 13 16"><path d="M.5 .5 H8.5 L12.5 4.5 V15.5 H.5 Z" fill="#fbfbfb" stroke="#c3c3c3" stroke-width="1"/><path d="M8.5 .5 V4.5 H12.5" fill="#eee" stroke="#c3c3c3" stroke-width=".8"/></svg>
<div class="ti" style="left:38px;top:409px"><span class="m">chszsj43.chh</span></div>
<div class="hd" style="left:12px;top:430px;width:6px"></div>
<svg class="ic" style="left:19px;top:422px" width="13" height="16" viewBox="0 0 13 16"><path d="M.5 .5 H8.5 L12.5 4.5 V15.5 H.5 Z" fill="#fbfbfb" stroke="#c3c3c3" stroke-width="1"/><path d="M8.5 .5 V4.5 H12.5" fill="#eee" stroke="#c3c3c3" stroke-width=".8"/></svg>
<div class="ti" style="left:38px;top:425px"><span class="m">Previous&nbsp;Backup&nbsp;of&nbsp;comp</span></div>
<div class="hd" style="left:12px;top:446px;width:6px"></div>
<svg class="ic" style="left:19px;top:438px" width="13" height="16" viewBox="0 0 13 16"><path d="M.5 .5 H8.5 L12.5 4.5 V15.5 H.5 Z" fill="#fbfbfb" stroke="#c3c3c3" stroke-width="1"/><path d="M8.5 .5 V4.5 H12.5" fill="#eee" stroke="#c3c3c3" stroke-width=".8"/></svg>
<div class="ti" style="left:38px;top:441px">城郊供电所<span class="m">.ddb</span></div>
<div class="hd" style="left:12px;top:462px;width:6px"></div>
<svg class="ic" style="left:18px;top:455px" width="14" height="14" viewBox="0 0 14 14"><rect x=".5" y=".5" width="13" height="13" fill="#fff" stroke="#555" stroke-width="1"/><rect x="1" y="1" width="12" height="3" fill="#3a56a8"/><path d="M3 8.5 L5.5 6.5 V10.5Z M11 8.5 L8.5 6.5 V10.5Z" fill="#333"/><rect x="2" y="11.3" width="10" height="1.2" fill="#999"/></svg>
<div class="ti" style="left:38px;top:457px">城郊供电所</div>
<div class="ti" style="left:19px;top:473px"><span class="m">ExcelToSQL</span></div>
<div class="ti" style="left:19px;top:489px"><span class="m">Excel</span>数据导入<span class="m">SQLServer</span></div>
<div class="ti" style="left:19px;top:505px"><span class="m">FindTarget</span></div>
<div class="ti" style="left:19px;top:521px"><span class="m">firebird_DEMO</span></div>
<div class="ti" style="left:19px;top:537px"><span class="m">Ftp</span></div>
<div class="ti" style="left:19px;top:553px"><span class="m">FtpUpdate</span></div>
<div class="ti" style="left:19px;top:569px"><span class="m">Good_Skill</span></div>
<div class="ti" style="left:19px;top:585px"><span class="m">GoodsBarcode</span></div>
</div>
<!-- right top panel -->
<div class="rpanel"></div>
<div class="lbl" style="left:204px;top:92px">布局:</div>
<div class="edit" style="left:240px;top:88px;width:167px;height:20px"></div>
<div class="lbl" style="left:245px;top:90px"><span class="m">Model</span></div>
<svg class="ic" style="left:394px;top:96px" width="8" height="5"><path d="M0 0H8L4 4.500Z" fill="#000"/></svg>
<div class="lbl" style="left:429px;top:92px">圆分段数:</div>
<div class="edit" style="left:490px;top:88px;width:50px;height:21px"></div>
<div class="lbl" style="left:493px;top:91px"><span class="m">16</span></div>
<div class="spin" style="left:523px;top:91px"></div><div class="spin" style="left:523px;top:98px"></div>
<svg class="ic" style="left:526px;top:92px" width="7" height="11"><path d="M0 3.500L3.5 0L7 3.500ZM0 7.500H7L3.5 11Z" fill="#000"/></svg>
<div class="lbl" style="left:566px;top:92px">多段线分段数:</div>
<div class="edit" style="left:650px;top:88px;width:50px;height:21px"></div>
<div class="lbl" style="left:653px;top:91px"><span class="m">25</span></div>
<div class="spin" style="left:684px;top:91px"></div><div class="spin" style="left:684px;top:98px"></div>
<svg class="ic" style="left:687px;top:92px" width="7" height="11"><path d="M0 3.500L3.5 0L7 3.500ZM0 7.500H7L3.5 11Z" fill="#000"/></svg>
<!-- canvas -->
<div style="left:195px;top:84px;width:3px;height:527px;background:#f9f9f9"></div><div style="left:198px;top:111px;width:662px;height:1px;background:#fbfbfb"></div><div class="canvas"></div><div class="canvas2"></div>
<svg class="ic dw" style="left:200px;top:113px;overflow:hidden" width="643" height="480" viewBox="200 113 643 480">
<polyline points="234.0,178.5 417.0,234.8"/>
<polyline points="256.5,185.5 257.2,164.2 271.5,155.5"/>
<polyline points="275.2,151.0 284.5,135.5 268.5,124.2"/>
<polyline points="285.2,193.8 294.5,175.0"/>
<polyline points="307.2,200.5 314.0,190.5 320.8,186.0 335.2,181.8 341.5,164.2"/>
<polyline points="342.0,211.2 347.2,194.2"/>
<polyline points="361.0,216.8 365.5,200.0"/>
<polyline points="373.2,221.0 368.8,238.5"/>
<polyline points="322.0,205.5 318.5,221.8 316.5,235.5 319.0,250.0 325.2,261.2 343.5,263.8"/>
<polyline points="392.8,227.2 406.5,202.2 395.2,190.5 395.2,168.5 383.5,156.0 392.8,138.0"/>
<polyline points="407.2,232.2 401.5,265.5"/>
<circle cx="361.0" cy="192.5" r=".6" style="fill:#000;stroke:none"/>
<polyline points="417.8,235.5 544.0,273.0 580.8,284.8"/>
<polyline points="418.5,235.0 424.0,211.8 452.2,180.0 473.5,162.2"/>
<polyline points="436.0,240.0 442.0,222.5 452.0,211.2"/>
<polyline points="444.0,243.0 442.0,263.0 441.5,265.0"/>
<polyline points="453.2,245.5 453.2,261.8"/>
<polyline points="463.2,248.8 466.5,233.0"/>
<polyline points="474.0,252.2 478.5,237.2"/>
<polyline points="485.8,255.5 490.2,243.0 503.5,229.2"/>
<polyline points="501.0,260.0 505.2,244.2"/>
<polyline points="517.0,265.0 522.8,251.8 520.2,220.0"/>
<polyline points="529.5,268.5 534.0,256.8 547.8,249.2"/>
<polyline points="616.0,229.2 630.2,221.2 648.5,221.2 664.5,232.5 664.5,249.2 675.2,263.8 689.0,266.8 695.2,273.0 701.0,283.2"/>
<polyline points="725.8,220.0 742.0,238.0 748.5,255.5 748.5,283.2"/>
<polyline points="720.8,257.5 720.0,283.2"/>
<polyline points="730.2,260.0 729.5,283.2"/>
<polyline points="792.2,249.2 791.5,283.2"/>
<polyline points="780.2,268.0 779.5,283.2"/>
<circle cx="616.0" cy="243.0" r=".6" style="fill:#000;stroke:none"/>
<circle cx="792.2" cy="231.0" r=".6" style="fill:#000;stroke:none"/>
<circle cx="793.5" cy="239.8" r=".6" style="fill:#000;stroke:none"/>
<polyline points="841.6,138.4 841.6,152.4 827.2,154.7"/>
<polyline points="828.7,154.7 842.4,157.5"/>
<polyline points="842.4,157.5 838.0,158.6 826.1,168.4 810.1,163.3"/>
<polyline points="821.0,176.1 835.7,181.4 842.4,180.3"/>
<polyline points="580.8,284.8 580.8,329.0"/>
<polyline points="565.2,287.2 579.5,292.0"/>
<polyline points="565.2,299.5 580.8,299.5"/>
<polyline points="441.5,265.2 449.8,282.8 443.2,295.8"/>
<polyline points="571.5,361.0 482.2,445.2 536.5,567.0 842.5,475.0"/>
<polyline points="550.2,380.8 535.2,373.2 519.0,374.5 499.0,378.0 485.2,384.5 477.2,398.2 458.5,398.2 446.5,410.0 440.2,420.5"/>
<polyline points="580.8,299.5 619.0,292.0 654.0,284.0 659.0,283.2 817.5,283.2 842.5,263.5"/>
<polyline points="619.8,292.0 621.0,302.8 619.0,315.2 610.2,324.5"/>
<polyline points="616.0,250.2 604.0,275.2 606.5,294.0"/>
<polyline points="591.0,282.8 591.0,290.2 592.0,296.5"/>
<polyline points="638.5,287.8 641.5,301.5"/>
<polyline points="644.0,269.0 646.0,285.2"/>
<polyline points="666.5,283.2 666.5,301.5 661.5,309.0 672.8,324.5 687.8,326.5 695.8,341.5"/>
<polyline points="689.5,283.2 690.8,298.5"/>
<polyline points="758.5,283.2 758.5,300.2"/>
<polyline points="770.2,283.2 770.2,299.0 761.0,314.5"/>
<circle cx="617.0" cy="243.2" r=".6" style="fill:#000;stroke:none"/>
<polyline points="822.0,254.0 806.5,266.5 805.5,283.2"/>
<polyline points="826.2,275.2 837.5,287.8"/>
<polyline points="836.2,267.8 841.2,274.0"/>
<polyline points="521.5,408.8 539.5,434.5 559.0,445.0 579.5,456.2"/>
<polyline points="488.2,461.2 460.2,477.5"/>
<polyline points="496.5,480.0 480.2,490.5"/>
<polyline points="504.0,492.0 514.8,484.2"/>
<circle cx="581.5" cy="465.0" r=".6" style="fill:#000;stroke:none"/>
<polyline points="508.2,502.5 487.0,520.0 452.8,520.0 437.8,527.0 426.5,540.0 436.0,553.8"/>
<polyline points="514.5,517.5 502.2,526.2 495.2,537.5 484.0,542.5 478.5,556.8"/>
<polyline points="520.8,528.8 533.2,521.8"/>
<polyline points="524.8,539.2 537.8,533.8 552.8,530.5 560.2,520.5 575.2,521.2 582.8,505.0 603.5,504.2 611.5,491.2"/>
<polyline points="527.8,548.8 519.0,560.0"/>
<polyline points="534.0,561.2 518.5,573.0 479.0,574.2 459.0,579.5 436.5,575.0 426.0,569.2"/>
<polyline points="555.2,562.0 565.2,572.5 570.2,584.2 589.0,585.5 602.8,576.2 618.5,574.2 630.2,563.5 641.5,560.0 656.5,558.5 674.0,564.8"/>
<circle cx="531.5" cy="512.5" r=".6" style="fill:#000;stroke:none"/>
<circle cx="477.8" cy="587.0" r=".6" style="fill:#000;stroke:none"/>
<polyline points="556.5,376.2 569.8,386.8 585.2,389.2 599.0,386.2 609.0,396.2 616.0,410.0 626.5,420.5"/>
<polyline points="693.2,520.0 694.2,500.5 702.5,490.0 720.0,485.8 729.2,473.2 750.5,472.5 760.5,458.2 776.8,456.2"/>
<polyline points="768.8,497.5 767.5,517.5"/>
<polyline points="806.8,485.0 810.0,464.5 825.0,451.2 842.5,453.2"/>
<line x1="213.2" y1="346.5" x2="843" y2="346.5"/><line x1="213.2" y1="360.3" x2="843" y2="360.3"/>
<circle cx="575.3" cy="335.3" r="7.3"/><circle cx="568.5" cy="339.5" r="7.3"/>
<rect class="s" x="590" y="273" width="4.5" height="3.2"/>
<rect class="s" x="-2.2" y="-1.3" width="4.4" height="2.6" transform="translate(273.6 153.3) rotate(-32)"/>
<text transform="translate(273.2 128.4) scale(.8 1)">196</text>
<text transform="translate(289.5 141.7) scale(.8 1)">197</text>
<text transform="translate(281.5 160.9) scale(.8 1)">202</text>
<text transform="translate(239.8 165.9) scale(.8 1)">198</text>
<text transform="translate(298.2 180.9) scale(.8 1)">94</text>
<text transform="translate(344.8 170.9) scale(.8 1)">95</text>
<text transform="translate(338.0 190.7) scale(.8 1)">210</text>
<text transform="translate(319.0 199.9) scale(.8 1)">96</text>
<text transform="translate(364.5 194.9) scale(.8 1)">209</text>
<text transform="translate(348.5 204.7) scale(.8 1)">102</text>
<text transform="translate(369.5 207.9) scale(.8 1)">103</text>
<text transform="translate(324.5 225.7) scale(.8 1)">101</text>
<text transform="translate(320.8 241.7) scale(.8 1)">100</text>
<text transform="translate(323.2 253.7) scale(.8 1)">99</text>
<text transform="translate(369.5 248.7) scale(.8 1)">104</text>
<text transform="translate(309.0 273.4) scale(.8 1)">98</text>
<text transform="translate(346.0 272.7) scale(.8 1)">97</text>
<text transform="translate(399.5 142.7) scale(.8 1)">106</text>
<text transform="translate(389.8 159.9) scale(.8 1)">105</text>
<text transform="translate(402.8 171.9) scale(.8 1)">107</text>
<text transform="translate(403.2 193.9) scale(.8 1)">108</text>
<text transform="translate(400.5 226.7) scale(.8 1)">110</text>
<text transform="translate(478.5 168.9) scale(.8 1)">113</text>
<text transform="translate(464.5 182.9) scale(.8 1)">114</text>
<text transform="translate(449.8 196.9) scale(.8 1)">116</text>
<text transform="translate(439.0 207.9) scale(.8 1)">115</text>
<text transform="translate(411.0 202.9) scale(.8 1)">109</text>
<text transform="translate(425.8 223.2) scale(.8 1)">117</text>
<text transform="translate(456.5 220.9) scale(.8 1)">120</text>
<text transform="translate(442.8 234.9) scale(.8 1)">119</text>
<text transform="translate(467.2 231.7) scale(.8 1)">063</text>
<text transform="translate(480.2 236.7) scale(.8 1)">064</text>
<text transform="translate(500.2 226.7) scale(.8 1)">065</text>
<text transform="translate(489.8 248.7) scale(.8 1)">066</text>
<text transform="translate(505.2 253.7) scale(.8 1)">067</text>
<text transform="translate(525.2 222.7) scale(.8 1)">068</text>
<text transform="translate(526.0 240.7) scale(.8 1)">069</text>
<text transform="translate(526.0 256.9) scale(.8 1)">070</text>
<text transform="translate(550.2 257.9) scale(.8 1)">071</text>
<text transform="translate(537.2 268.2) scale(.8 1)">072</text>
<text transform="translate(456.5 265.7) scale(.8 1)">062</text>
<text transform="translate(409.8 252.9) scale(.8 1)">111</text>
<text transform="translate(407.8 272.7) scale(.8 1)">112</text>
<text transform="translate(587.0 267.4) scale(.8 1)">208</text>
<text transform="translate(601.0 226.7) scale(.8 1)">058</text>
<text transform="translate(797.0 156.7) scale(.8 1)">014</text>
<text transform="translate(803.0 181.7) scale(.8 1)">016</text>
<text transform="translate(618.2 214.9) scale(.8 1)">200</text>
<text transform="translate(649.0 219.7) scale(.8 1)">057</text>
<text transform="translate(667.8 233.7) scale(.8 1)">056</text>
<text transform="translate(620.2 250.9) scale(.8 1)">076</text>
<text transform="translate(619.0 261.4) scale(.8 1)">077</text>
<text transform="translate(613.5 271.7) scale(.8 1)">078</text>
<text transform="translate(667.0 252.9) scale(.8 1)">055</text>
<text transform="translate(677.0 261.7) scale(.8 1)">053</text>
<text transform="translate(695.8 270.9) scale(.8 1)">054</text>
<text transform="translate(645.2 272.7) scale(.8 1)">085</text>
<text transform="translate(709.0 252.9) scale(.8 1)">052</text>
<text transform="translate(729.8 257.9) scale(.8 1)">051</text>
<text transform="translate(726.0 219.7) scale(.8 1)">047</text>
<text transform="translate(746.0 243.9) scale(.8 1)">028</text>
<text transform="translate(753.0 262.7) scale(.8 1)">029</text>
<text transform="translate(775.8 266.7) scale(.8 1)">049</text>
<text transform="translate(793.2 265.9) scale(.8 1)">026</text>
<text transform="translate(797.2 252.9) scale(.8 1)">027</text>
<text transform="translate(796.0 241.9) scale(.8 1)">203</text>
<text transform="translate(796.0 228.9) scale(.8 1)">204</text>
<text transform="translate(831.1 139.9) scale(.8 1)">013</text>
<text transform="translate(819.9 163.6) scale(.8 1)">015</text>
<text transform="translate(824.1 192.8) scale(.8 1)">017</text>
<text transform="translate(446.5 274.7) scale(.8 1)">061</text>
<text transform="translate(453.2 290.7) scale(.8 1)">060</text>
<text transform="translate(444.0 306.7) scale(.8 1)">059</text>
<text transform="translate(549.0 288.9) scale(.8 1)">073</text>
<text transform="translate(547.2 304.7) scale(.8 1)">074</text>
<text transform="translate(508.5 373.9) scale(.8 1)">164</text>
<text transform="translate(537.2 372.9) scale(.8 1)">166</text>
<text transform="translate(478.5 381.9) scale(.8 1)">167</text>
<text transform="translate(498.5 389.7) scale(.8 1)">165</text>
<text transform="translate(454.5 394.7) scale(.8 1)">168</text>
<text transform="translate(567.0 383.7) scale(.8 1)">211</text>
<text transform="translate(602.8 385.9) scale(.8 1)">173</text>
<text transform="translate(607.2 281.9) scale(.8 1)">079</text>
<text transform="translate(592.2 292.7) scale(.8 1)">075</text>
<text transform="translate(625.2 308.9) scale(.8 1)">082</text>
<text transform="translate(645.2 307.9) scale(.8 1)">084</text>
<text transform="translate(622.0 323.9) scale(.8 1)">081</text>
<text transform="translate(613.2 334.7) scale(.8 1)">080</text>
<text transform="translate(694.0 305.7) scale(.8 1)">093</text>
<text transform="translate(736.0 303.7) scale(.8 1)">050</text>
<text transform="translate(761.0 326.7) scale(.8 1)">207</text>
<text transform="translate(775.0 305.7) scale(.8 1)">048</text>
<text transform="translate(828.0 299.7) scale(.8 1)">046</text>
<text transform="translate(477.8 410.9) scale(.8 1)">199</text>
<text transform="translate(427.0 428.2) scale(.8 1)">170</text>
<text transform="translate(436.5 404.7) scale(.8 1)">169</text>
<text transform="translate(585.2 401.9) scale(.8 1)">174</text>
<text transform="translate(536.0 419.9) scale(.8 1)">162</text>
<text transform="translate(544.0 435.9) scale(.8 1)">162</text>
<text transform="translate(557.8 445.7) scale(.8 1)">161</text>
<text transform="translate(572.0 453.7) scale(.8 1)">180</text>
<text transform="translate(585.2 462.7) scale(.8 1)">159</text>
<text transform="translate(585.2 475.7) scale(.8 1)">218</text>
<text transform="translate(470.8 463.9) scale(.8 1)">147</text>
<text transform="translate(446.5 473.9) scale(.8 1)">148</text>
<text transform="translate(520.8 489.7) scale(.8 1)">145</text>
<text transform="translate(466.0 500.9) scale(.8 1)">146</text>
<text transform="translate(534.5 516.0) scale(.8 1)">213</text>
<text transform="translate(536.0 525.0) scale(.8 1)">133</text>
<text transform="translate(557.8 514.7) scale(.8 1)">130</text>
<text transform="translate(582.8 503.9) scale(.8 1)">128</text>
<text transform="translate(606.0 514.7) scale(.8 1)">127</text>
<text transform="translate(577.0 532.0) scale(.8 1)">129</text>
<text transform="translate(554.0 541.7) scale(.8 1)">131</text>
<text transform="translate(536.0 545.0) scale(.8 1)">132</text>
<text transform="translate(506.0 534.7) scale(.8 1)">137</text>
<text transform="translate(499.8 545.7) scale(.8 1)">136</text>
<text transform="translate(484.8 552.7) scale(.8 1)">134</text>
<text transform="translate(505.2 560.7) scale(.8 1)">126</text>
<text transform="translate(481.5 566.0) scale(.8 1)">214</text>
<text transform="translate(481.5 574.7) scale(.8 1)">124</text>
<text transform="translate(502.8 584.7) scale(.8 1)">125</text>
<text transform="translate(521.5 582.0) scale(.8 1)">201</text>
<text transform="translate(461.5 589.0) scale(.8 1)">122</text>
<text transform="translate(441.0 588.7) scale(.8 1)">123</text>
<text transform="translate(417.0 569.7) scale(.8 1)">121</text>
<text transform="translate(439.0 562.7) scale(.8 1)">139</text>
<text transform="translate(409.8 539.0) scale(.8 1)">138</text>
<text transform="translate(426.0 523.0) scale(.8 1)">140</text>
<text transform="translate(449.8 513.7) scale(.8 1)">141</text>
<text transform="translate(467.0 531.0) scale(.8 1)">142</text>
<text transform="translate(480.2 517.0) scale(.8 1)">143</text>
<text transform="translate(497.8 519.7) scale(.8 1)">144</text>
<text transform="translate(569.0 574.0) scale(.8 1)">158</text>
<text transform="translate(600.2 574.0) scale(.8 1)">215</text>
<text transform="translate(481.5 594.7) scale(.8 1)">219</text>
<text transform="translate(569.0 594.0) scale(.8 1)">180</text>
<text transform="translate(592.8 594.7) scale(.8 1)">157</text>
<text transform="translate(613.5 401.9) scale(.8 1)">172</text>
<text transform="translate(618.5 414.7) scale(.8 1)">171</text>
<text transform="translate(632.2 427.9) scale(.8 1)">212</text>
<text transform="translate(615.2 496.9) scale(.8 1)">135</text>
<text transform="translate(782.0 462.9) scale(.8 1)">179</text>
<text transform="translate(761.8 469.9) scale(.8 1)">178</text>
<text transform="translate(753.8 482.9) scale(.8 1)">177</text>
<text transform="translate(729.5 471.7) scale(.8 1)">126</text>
<text transform="translate(720.8 495.9) scale(.8 1)">125</text>
<text transform="translate(692.5 485.7) scale(.8 1)">149</text>
<text transform="translate(674.5 503.9) scale(.8 1)">150</text>
<text transform="translate(769.5 528.7) scale(.8 1)">180</text>
<text transform="translate(825.5 462.9) scale(.8 1)">181</text>
<text transform="translate(811.2 474.9) scale(.8 1)">216</text>
<text transform="translate(629.0 560.7) scale(.8 1)">155</text>
<text transform="translate(654.5 556.0) scale(.8 1)">152</text>
<text transform="translate(644.0 571.7) scale(.8 1)">153</text>
<text transform="translate(620.8 585.0) scale(.8 1)">154</text>
<text transform="translate(672.0 574.7) scale(.8 1)">151</text>
<text transform="translate(545.3 147.8) scale(1.07 1)" style="font-family:'Liberation Sans','Noto Sans CJK SC',sans-serif;font-size:9.200px;stroke:none">黄龙桥村</text>
<text transform="translate(545.3 160.9) scale(.82 1)" style="font-size:11.200px;stroke:none">53514016</text>
<text x="754.5" y="357.1" style="font-family:'Liberation Sans','Noto Sans CJK SC',sans-serif;font-size:7.800px;stroke-width:.1px">黄龙房</text>
<text x="0" y="0" text-anchor="middle" transform="translate(668.5 468) rotate(-16.5)" style="font-family:'Liberation Sans','Noto Sans CJK SC',sans-serif;font-size:8.600px;stroke:none">新和黄龙二组</text>
</svg>
<div class="vtr" style="left:177px;top:85px;height:507px"></div>
<div class="htr" style="left:10px;top:592px;width:167px"></div>
<div class="cnr" style="left:177px;top:592px"></div>
<div class="vth" style="left:177px;top:234px;height:35px"></div><div class="grh" style="left:181px;top:248.5px"></div><div class="grh" style="left:181px;top:251.5px"></div><div class="grh" style="left:181px;top:254.5px"></div>
<div class="hth" style="left:64px;top:593px;width:60px"></div><div class="grv" style="left:91px;top:597px"></div><div class="grv" style="left:94px;top:597px"></div><div class="grv" style="left:97px;top:597px"></div>
<svg class="ic" style="left:181.8px;top:93px" width="7" height="4"><path d="M0 4 L3.5 0 L7 4Z" fill="#404040"/></svg>
<svg class="ic" style="left:182px;top:581px" width="7" height="4"><path d="M0 0 L7 0 L3.5 4Z" fill="#404040"/></svg>
<svg class="ic" style="left:17px;top:597.5px" width="4" height="7"><path d="M4 0 L0 3.5 L4 7Z" fill="#404040"/></svg>
<svg class="ic" style="left:166px;top:597.5px" width="4" height="7"><path d="M0 0 L4 3.5 L0 7Z" fill="#404040"/></svg>
<div class="vtr" style="left:843px;top:114px;height:479px"></div>
<div class="htr" style="left:200px;top:593px;width:643px"></div>
<div class="cnr" style="left:843px;top:593px"></div>
<div class="vth" style="left:843px;top:171px;height:355px"></div><div class="grh" style="left:847px;top:345.5px"></div><div class="grh" style="left:847px;top:348.5px"></div><div class="grh" style="left:847px;top:351.5px"></div>
<div class="hth" style="left:269px;top:594px;width:411px"></div><div class="grv" style="left:471.5px;top:598px"></div><div class="grv" style="left:474.5px;top:598px"></div><div class="grv" style="left:477.5px;top:598px"></div>
<svg class="ic" style="left:848px;top:121px" width="7" height="4"><path d="M0 4 L3.5 0 L7 4Z" fill="#404040"/></svg>
<svg class="ic" style="left:848px;top:582px" width="7" height="4"><path d="M0 0 L7 0 L3.5 4Z" fill="#404040"/></svg>
<svg class="ic" style="left:206px;top:598px" width="4" height="7"><path d="M4 0 L0 3.5 L4 7Z" fill="#404040"/></svg>
<svg class="ic" style="left:832px;top:598px" width="4" height="7"><path d="M0 0 L4 3.5 L0 7Z" fill="#404040"/></svg>
<!-- status -->
<div class="status"></div>
<div class="st" style="left:11px">黄龙桥村.DWG</div>
<div class="sdiv" style="left:309px"></div><div class="sdiv" style="left:358px"></div><div class="sdiv" style="left:559px"></div>
<div class="st" style="left:320px">00:00</div>
<div class="st" style="left:364px">(-19.992; 352.592; 0.000)</div>
<svg class="ic" style="left:848px;top:617px" width="13" height="13"><g fill="#b8b8b8"><rect x="9" y="1" width="2" height="2"/><rect x="9" y="5" width="2" height="2"/><rect x="5" y="5" width="2" height="2"/><rect x="9" y="9" width="2" height="2"/><rect x="5" y="9" width="2" height="2"/><rect x="1" y="9" width="2" height="2"/></g></svg>
</body></html>
